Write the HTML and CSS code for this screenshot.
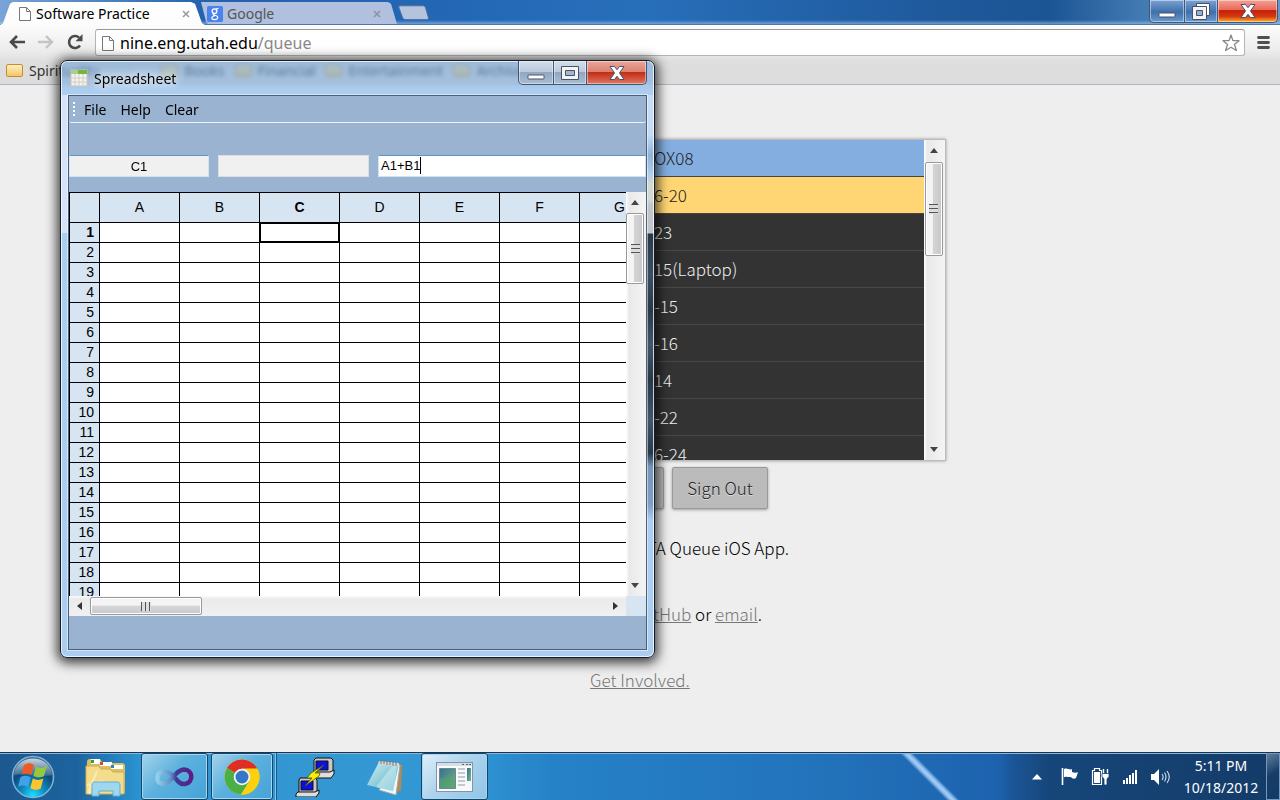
FILE: index.html
```html
<!DOCTYPE html>
<html lang="en">
<head>
<meta charset="utf-8">
<title>Software Practice</title>
<link rel="stylesheet" href="styles.css">
</head>
<body>
<header class="browser">
  <div class="tabstrip">
    <div class="tab tab-active">
      <svg class="doc" viewBox="0 0 12 14" width="12" height="14"><path d="M1 .5h6.500l4 4v9H.5V.5z M7.500.5v4h4" fill="#fff" stroke="#777"/></svg>
      <span class="tab-title">Software Practice</span>
      <button class="tab-close" aria-label="Close tab"><svg viewBox="0 0 8 8" width="8" height="8"><path d="M1 1l6 6M7 1L1 7" stroke="#999" stroke-width="1.500"/></svg></button>
    </div>
    <div class="tab tab-idle">
      <svg viewBox="0 0 16 16" width="16" height="16"><rect width="16" height="16" rx="1.500" fill="#4a82ee"/><circle cx="7.500" cy="5.200" r="2.300" fill="none" stroke="#fff" stroke-width="1.400"/><path d="M9 3l2.500-.6M7 7.500c-2 1 0 1.700 1.500 2 3.500.8 2.500 4.200-.8 4.200-3.600 0-4-3.200-.2-3.700" fill="none" stroke="#fff" stroke-width="1.200"/></svg>
      <span class="tab-title">Google</span>
      <button class="tab-close" aria-label="Close tab"><svg viewBox="0 0 8 8" width="8" height="8"><path d="M1 1l6 6M7 1L1 7" stroke="#8b93a5" stroke-width="1.500"/></svg></button>
    </div>
    <button class="newtab" aria-label="New tab"><svg viewBox="0 0 32 16" width="32" height="16"><path d="M3.500.8h22c2 0 2.600.8 3.100 2.200l2.600 9c.5 1.800 0 2.600-1.800 2.600H9c-2.200 0-3-.8-3.600-2.500L2 3C1.600 1.500 2 .8 3.500.8z" fill="#b4c4de" stroke="#54709c"/></svg></button>
    <div class="caption caption-main">
      <button class="cap cap-glass cap-first" aria-label="Minimize"><svg viewBox="0 0 18 6" width="18" height="6"><rect x="1" y="1" width="16" height="4" rx=".5" fill="#fff" stroke="#4a5268"/></svg></button>
      <button class="cap cap-glass cap-mid" aria-label="Restore"><svg viewBox="0 0 18 17" width="18" height="17"><path d="M4.500.5h13v12h-13z" fill="#fff" stroke="#4a5268"/><path d="M.5 3.500h14v13H.5z" fill="#f4f4f6" stroke="#4a5268"/><path d="M4.500 7.500h6v5h-6z" fill="#8fb0dc" stroke="#4a5268"/></svg></button>
      <button class="cap cap-hot cap-last" aria-label="Close"><svg viewBox="0 0 16 14" width="16" height="14"><path d="M1 .5h4.500L8 3.700 10.500.5H15L10.500 7l4.500 6.500h-4.500L8 10.300 5.500 13.500H1L5.500 7z" fill="#fff" stroke="#4a5268"/></svg></button>
    </div>
  </div>
  <div class="toolbar">
    <button class="tool" aria-label="Back"><svg viewBox="0 0 18 16" width="18" height="16"><path d="M17 8H4M9 2L3 8l6 6" fill="none" stroke="#4a4a4a" stroke-width="2.600"/></svg></button>
    <button class="tool" aria-label="Forward"><svg viewBox="0 0 18 16" width="18" height="16"><path d="M1 8h13M9 2l6 6-6 6" fill="none" stroke="#c4c4c4" stroke-width="2.400"/></svg></button>
    <button class="tool" aria-label="Reload"><svg viewBox="0 0 18 18" width="18" height="18"><path d="M14 12.500A6 6 0 1 1 13 4.500" fill="none" stroke="#4a4a4a" stroke-width="2.600"/><path d="M16.500 1v7.200H9.500z" fill="#4a4a4a"/></svg></button>
    <div class="omnibox">
      <svg class="doc" viewBox="0 0 12 15" width="12" height="15"><path d="M1 .5h6.500l4 4v10H.5V.5z M7.500.5v4h4" fill="#fff" stroke="#777"/></svg>
      <span class="url">nine.eng.utah.edu<span class="url-path">/queue</span></span>
      <button class="star" aria-label="Bookmark this page"><svg viewBox="0 0 18 18" width="18" height="18"><path d="M9 1l1.900 5.600 6.100.1-4.600 3.700 2 6.100L9 13.300l-5.400 3.200 2-6.100L1 6.700l6.100-.1z" fill="#fff" stroke="#888" stroke-width="1.300" stroke-linejoin="round"/></svg></button>
    </div>
    <button class="tool menu" aria-label="Menu"><svg viewBox="0 0 13 13" width="13" height="13"><path d="M1.500 1.500h10M1.500 6.500h10M1.500 11.500h10" stroke="#505050" stroke-width="2.800" stroke-linecap="round"/></svg></button>
  </div>
  <nav class="bookmarks">
    <a href="#" class="bm">Spirituality</a>
    <a href="#" class="bm bm-far">Books</a>
    <a href="#" class="bm">Financial</a>
    <a href="#" class="bm">Entertainment</a>
    <a href="#" class="bm">Archives</a>
  </nav>
</header>

<main class="page">
  <section class="queue">
    <ul class="rows">
      <li class="row row-blue">OX08</li>
      <li class="row row-gold">6-20</li>
      <li class="row">23</li>
      <li class="row">15(Laptop)</li>
      <li class="row">-15</li>
      <li class="row">-16</li>
      <li class="row">14</li>
      <li class="row">-22</li>
      <li class="row">6-24</li>
    </ul>
    <div class="vbar">
      <span class="arrow up"></span>
      <span class="thumb thumb-queue"></span>
      <span class="arrow down"></span>
    </div>
  </section>
  <div class="actions">
    <button class="btn btn-wide" aria-label="Queue action"></button>
    <button class="btn">Sign Out</button>
  </div>
  <p class="note note-app">TA Queue iOS App.</p>
  <p class="note note-links"><a href="#">GitHub</a> or <a href="#">email</a>.</p>
  <p class="note"><a href="#">Get Involved.</a></p>
</main>

<section class="window" aria-label="Spreadsheet">
  <div class="titlebar">
    <svg class="appicon" viewBox="0 0 18 18" width="18" height="18"><rect x="1" y="1" width="16" height="16" fill="#f4f2ee" stroke="#c9c5bd"/><path d="M1 1h16v4H1z" fill="#a9d08a"/><path d="M8 1h9v4H8z" fill="#72b83c"/><path d="M1 9h16M1 13h16M5 5v12M9 5v12M13 5v12" stroke="#d2cec6"/></svg>
    <h1 class="title">Spreadsheet</h1>
    <div class="caption">
      <button class="cap cap-soft cap-first" aria-label="Minimize"><svg viewBox="0 0 18 6" width="18" height="6"><rect x="1" y="1" width="16" height="4" rx=".5" fill="#fff" stroke="#4a5268"/></svg></button>
      <button class="cap cap-soft cap-mid" aria-label="Maximize"><svg viewBox="0 0 18 14" width="18" height="14"><path d="M.5.5h17v13H.5z" fill="#f4f4f6" stroke="#4a5268"/><path d="M4.500 4.500h9v5h-9z" fill="#a6b8cc" stroke="#4a5268"/></svg></button>
      <button class="cap cap-red cap-last" aria-label="Close"><svg viewBox="0 0 16 14" width="16" height="14"><path d="M1 .5h4.500L8 3.700 10.500.5H15L10.500 7l4.500 6.500h-4.500L8 10.300 5.500 13.500H1L5.500 7z" fill="#fff" stroke="#4a5268"/></svg></button>
    </div>
  </div>
  <div class="client">
    <div class="menubar">
      <span class="grip"></span>
      <button class="menuitem">File</button>
      <button class="menuitem">Help</button>
      <button class="menuitem">Clear</button>
    </div>
    <div class="fields">
      <input class="field field-name" aria-label="Cell name" value="C1" readonly>
      <input class="field field-value" aria-label="Cell value" readonly>
      <div class="field field-edit"><span class="typed" role="textbox" aria-label="Cell contents" contenteditable="true">A1+B1</span></div>
    </div>
    <div class="sheet">
      <div class="cells">
        <table class="grid">
          <thead><tr><th class="corner"></th><th>A</th><th>B</th><th class="on">C</th><th>D</th><th>E</th><th>F</th><th>G</th></tr></thead>
          <tbody id="body"></tbody>
        </table>
      </div>
      <div class="vbar vbar-sheet">
        <span class="arrow up"></span>
        <span class="thumb thumb-sheet"></span>
        <span class="arrow down"></span>
      </div>
      <div class="hbar">
        <span class="arrow left"></span>
        <span class="thumb thumb-h"></span>
        <span class="arrow right"></span>
      </div>
    </div>
  </div>
</section>

<footer class="taskbar">
  <button class="start" aria-label="Start">
    <svg viewBox="0 0 44 44" width="44" height="44"><defs><radialGradient id="orb" cx=".5" cy=".95" r=".8"><stop offset="0" stop-color="#1ce0ff"/><stop offset=".35" stop-color="#118fc4"/><stop offset=".75" stop-color="#0c4a7c"/><stop offset="1" stop-color="#38607f"/></radialGradient><linearGradient id="shine" x2="0" y2="1"><stop offset="0" stop-color="#dfe9f0" stop-opacity=".85"/><stop offset="1" stop-color="#a9c2d4" stop-opacity=".25"/></linearGradient></defs><circle cx="22" cy="22" r="20.500" fill="url(#orb)" stroke="#7db4d8" stroke-width="1.500"/><path d="M3 20C5-2 39-2 41 20 30 23 14 17 3 20z" fill="url(#shine)"/><path d="M13 10c4-2.500 7-2.300 10 0l-2.600 10c-3-2-6-2-10-.3z" fill="#ee5a24"/><path d="M25 11.500c3.500 2 7 2 11-.5l-3 10c-4 2-7 1.800-10.600 0z" fill="#94c83d"/><path d="M9.500 22c4-2 7-1.700 10.200.3L17 32c-3-2-6-2.200-10-.3z" fill="#41a2e4"/><path d="M21.800 23.500c3.500 2 7 1.800 10.600 0l-2.700 10c-4 2-7 1.500-10.400-.5z" fill="#fdc52d"/></svg>
  </button>
  <button class="task task-plain task-explorer" aria-label="Explorer">
    <svg viewBox="0 0 42 40" width="42" height="40"><path d="M3 5c0-2 1-3 3-3h10l3 4h19c2 0 3 1 3 3v27H2z" fill="#dcbf62"/><path d="M7 2h9v5H7zM16 5h12v4H16zM27 8h12v4H27z" fill="#fff"/><path d="M7 3h3v3H7z" fill="#3a9a48"/><path d="M16 5h3v3h-3z" fill="#e0442e"/><path d="M27 8h3v3h-3z" fill="#2d7fd0"/><path d="M2 9h12l3 3h9l3 3h11v22H2z" fill="#f3dd8c" stroke="#d0ae4c"/><path d="M4 36l9-22M3 28l16-4M5 37l13-12" stroke="#fff6cf" stroke-width="2" opacity=".6"/><path d="M8 39V28c0-2 1-3 3-3h22c2 0 3 1 3 3v11h-7v-5H15v5z" fill="#9ed8ee" stroke="#65acd2"/></svg>
  </button>
  <button class="task task-open" aria-label="Visual Studio">
    <svg viewBox="0 0 40 24" width="40" height="24"><defs><linearGradient id="vs" x2="1"><stop offset="0" stop-color="#8fd0ea"/><stop offset=".4" stop-color="#5f8fc4"/><stop offset=".55" stop-color="#3f3a96"/><stop offset="1" stop-color="#5a1f86"/></linearGradient></defs><path d="M20 13C15 7 11 6 7 7 1 9 1 17 7 18.500c9 2 11-13 22-14 9 0 10 13 1 14.500-5 1-7-3-10-6z" fill="none" stroke="url(#vs)" stroke-width="4.500"/></svg>
  </button>
  <button class="task task-open task-chrome" aria-label="Chrome">
    <svg viewBox="0 0 36 36" width="36" height="36"><circle cx="18" cy="18" r="17.500" fill="#fbd00f"/><path d="M18 18L3 9A17.500 17.500 0 0 1 33.200 9.500z" fill="#dd2f25"/><path d="M18 18L3 9a17.500 17.500 0 0 0 14 26.400L25.500 22z" fill="#4caf46"/><path d="M18 9.500h15.200a17.500 17.500 0 0 1-16 26L25.500 22z" fill="#fbd00f"/><circle cx="18" cy="18" r="8.300" fill="#f2f4f6"/><circle cx="18" cy="18" r="6.500" fill="#3378c6"/></svg>
  </button>
  <span class="stack"></span>
  <button class="task task-plain task-putty" aria-label="PuTTY">
    <svg viewBox="0 0 40 40" width="40" height="40"><g stroke="#111"><path d="M21 1h15l2 2v12l-2 2H19V3z" fill="#c8c8c8"/><path d="M21 4h12v9H21z" fill="#0c10dc"/><path d="M18 15h17l4-2v4l-3 4H16v-3z" fill="#dedede"/><path d="M5 21h15l2 2v12l-2 2H4V23z" fill="#c8c8c8"/><path d="M6 24h12v9H6z" fill="#0c10dc"/><path d="M3 35h17l4-2v3l-3 4H1v-3z" fill="#dedede"/></g><path d="M29 8L16 16l-4 5h5l-7 8 14-10 1-3h-5z" fill="#f8f000" stroke="#58580a" stroke-width=".8"/></svg>
  </button>
  <button class="task task-plain task-notepad" aria-label="Notepad">
    <svg viewBox="0 0 38 38" width="38" height="38"><defs><linearGradient id="np" y2="1"><stop offset="0" stop-color="#d8f0f4"/><stop offset="1" stop-color="#45acc2"/></linearGradient></defs><path d="M32 6l4 1-1 26-4 1z" fill="#b58a4a"/><path d="M31 6l3 1-4 30-17-5z" fill="#f5f8fa" stroke="#9cabb5"/><path d="M13 4l20 2-6 27L1 27z" fill="url(#np)"/><path d="M17 20l10-13 4 1-3 27-18-6z" fill="#e0f1f5" opacity=".5"/><path d="M13 3l20 2v4L12 6z" fill="#d4d6d7"/><path d="M15 2v4M18 2v4M21 2v5M24 3v4M27 3v5M30 4v4" stroke="#777"/></svg>
  </button>
  <button class="task task-current" aria-label="Spreadsheet">
    <svg viewBox="0 0 38 32" width="38" height="32"><defs><linearGradient id="pane" x2="1" y2="1"><stop offset="0" stop-color="#386c98"/><stop offset="1" stop-color="#72bd76"/></linearGradient></defs><rect x=".5" y="1.500" width="36" height="29" fill="#f7f9fa" stroke="#8295a8"/><path d="M1 2h35v3H1z" fill="#d5dde5"/><path d="M26 3.500h2M30 3.500h2M33 3.500h2" stroke="#566"/><path d="M3.500 7.500h16v20h-16z" fill="url(#pane)" stroke="#6d8799"/><path d="M4 18c5-3 10-2 15 2v7H4z" fill="#51a06b" opacity=".6"/><path d="M22 8h7M22 12h7M22 16h7M22 20h7M22 24h7" stroke="#c4c9ce" stroke-width="2"/><path d="M31 7h4v13h-4z" fill="url(#pane)"/></svg>
  </button>
  <div class="tray">
    <svg viewBox="0 0 10 6" width="10" height="6"><path d="M5 0l5 5.500H0z" fill="#fff"/></svg>
    <svg class="i-flag" viewBox="0 0 18 19" width="18" height="19"><path d="M1.500 1v17" stroke="#fff" stroke-width="1.600"/><path d="M3 2c3-1.500 5 1 8 .3V5c2 1 4 1 6 .3L15 11c-2 1.500-4 .5-5-1-3 .5-4-1-7 .3z" fill="#fff"/></svg>
    <svg class="i-batt" viewBox="0 0 19 19" width="19" height="19"><path d="M1.500 3.500h2v-2h5v2h2v14h-9z" fill="none" stroke="#fff" stroke-width="1.200"/><path d="M3 5h6v11H3z" fill="#fff"/><path d="M12.500 2v5M16.500 2v5" stroke="#fff" stroke-width="1.400"/><path d="M11 6.500h7v3l-2 2.500v6h-3v-6l-2-2.500z" fill="#fff" stroke="#143f70" stroke-width=".8"/></svg>
    <svg class="i-sig" viewBox="0 0 16 14" width="16" height="14"><path d="M1 10h2v4H1zM4 8h2v6H4zM7 5h2v9H7zM10 3h2v11h-2zM13 0h2v14h-2z" fill="#fff"/></svg>
    <svg class="i-vol" viewBox="0 0 20 18" width="20" height="18"><path d="M1 6h3l5-5v16l-5-5H1z" fill="#fff"/><path d="M12 6c1.500 2 1.500 4 0 6M14.500 4.500c2 3 2 6 0 9M17 3c3 4 3 8 0 12" fill="none" stroke="#d4e0ee" stroke-width="1.100"/></svg>
    <div class="clock"><span>5:11 PM</span><span>10/18/2012</span></div>
    <button class="peek" aria-label="Show desktop"></button>
  </div>
</footer>
<script src="sheet.js"></script>
</body>
</html>
```
FILE: sheet.js
```js
const body = document.getElementById('body');
for (let r = 1; r <= 19; r++) {
  const tr = document.createElement('tr');
  const th = document.createElement('th');
  th.textContent = r;
  if (r === 1) th.className = 'on';
  tr.appendChild(th);
  for (let c = 0; c < 7; c++) {
    const td = document.createElement('td');
    if (r === 1 && c === 2) td.className = 'selected';
    tr.appendChild(td);
  }
  body.appendChild(tr);
}
```
FILE: styles.css
```css
* { box-sizing: border-box; }
html, body { height: 100%; }
body {
  margin: 0;
  display: flex;
  flex-direction: column;
  position: relative;
  overflow: hidden;
  background: #eee;
  font-family: "Noto Sans", "Open Sans", sans-serif;
  font-size: 14px;
  color: #000;
}
button { font: inherit; color: inherit; border: 0; padding: 0; background: none; }
svg { display: block; flex: none; }

/* Browser chrome */
.browser { flex: none; background: linear-gradient(#fcfcfc 25px, #ebebeb 52px, #dedede 62px, #dcdcdc); border-bottom: 1px solid #b4b4c4; }
.tabstrip {
  display: flex;
  align-items: flex-end;
  height: 25px;
  background:
    linear-gradient(transparent 20px, rgba(160, 200, 240, .6) 24px, #5079a8 24px),
    linear-gradient(90deg, #7aa4d8, #2461ae 16%, #2367b4 34%, #286fba 50%, #1f5a9e 72%, #1c5594 82%, #4179b2 89%, #6d96c4);
}
.tab { display: flex; align-items: center; height: 23px; }
.tab-active {
  width: 205px;
  padding: 2px 15px 0 19px;
  background: linear-gradient(#fff, #fcfcfc);
  clip-path: polygon(0 100%, 3px 92%, 10px 8%, 13px 0, 191px 0, 195px 8%, 202px 92%, 205px 100%);
}
.tab-idle {
  width: 198px;
  margin-left: -6px;
  padding: 0 16px 0 8px;
  gap: 4px;
  background: #b0c0de;
  color: #555;
  clip-path: polygon(2px 0, 189px 0, 192px 8%, 198px 96%, 9px 96%, 7px 85%);
}
.tab-title { flex: 1; white-space: nowrap; }
.tab-active .tab-title { padding-left: 5px; }
.tab-active { padding-top: 0; }
.newtab { align-self: center; }
.caption { display: flex; margin-left: auto; align-self: flex-start; }
.cap {
  display: flex;
  align-items: center;
  justify-content: center;
  height: 24px;
  border: 1px solid #3d5878;
  border-top: 0;
  box-shadow: inset 0 0 0 1px rgba(255, 255, 255, .45);
}
.cap-first { width: 36px; border-radius: 0 0 0 5px; padding-top: 8px; }
.cap-mid { width: 33px; border-left: 0; }
.cap-last { width: 60px; border-left: 0; border-radius: 0 0 5px 0; }
.cap-glass { background: linear-gradient(#7ba2d0, #3d70ae 55%, #6c9ace); }
.cap-hot { background: linear-gradient(#f5a093, #e8695a 45%, #c32008 48%, #d43910 75%, #ffb02c); }
.cap-soft { background: linear-gradient(#d2deeb, #b9c9dc 48%, #91a7c2 50%, #aabdd4); }
.cap-red { background: linear-gradient(#eba698, #db8070 48%, #bd3019 50%, #d4503a 75%, #d97966); }
.caption-main .cap { height: 23px; }
.caption-main { padding-right: 2px; }

.toolbar { display: flex; align-items: center; height: 34px; padding: 0 9px 0 8px; }
.tool { width: 29px; display: flex; }
.omnibox {
  flex: 1;
  display: flex;
  align-items: center;
  height: 27px;
  padding: 2px 4px 0 6px;
  background: #fff;
  border: 1px solid #b4b4b4;
  border-top-color: #999;
  border-radius: 3px;
}
.url { flex: 1; padding-left: 6px; font-size: 16px; line-height: 24px; }
.url-path { color: #888; }
.menu { width: 26px; justify-content: flex-end; padding-right: 1px; }
.bookmarks { display: flex; align-items: center; height: 25px; padding: 0 6px 2px; gap: 10px; }
.bm { display: flex; align-items: center; gap: 6px; color: #333; text-decoration: none; line-height: 20px; }
.bm-far { margin-left: 52px; }
.bm::before {
  content: "";
  width: 15px;
  height: 11px;
  border: 1px solid #c58d33;
  border-radius: 2px;
  background: linear-gradient(#fff0bf, #f4c66a);
}

/* Queue page */
.page {
  flex: 1;
  display: flex;
  flex-direction: column;
  align-items: center;
  padding-top: 54px;
  font-family: "Noto Sans CJK SC", "Source Sans Pro", sans-serif;
  font-weight: 200;
  font-size: 17px;
  line-height: 26px;
}
.queue { display: flex; width: 612px; height: 322px; border: 1px solid #bbb; box-shadow: 0 0 3px #999; background: #333; }
.rows { flex: 1; margin: 0; padding: 0; list-style: none; overflow: hidden; }
.row { height: 37px; padding: 5px 0 5px 319px; border-bottom: 1px solid #484848; color: #eee; line-height: 26px; }
.row-blue { background: #84aee0; color: #222; border-color: #444; }
.row-gold { background: #ffd673; color: #222; border-color: #444; }
.actions { display: flex; gap: 8px; margin-top: 6px; }
.btn {
  height: 42px;
  padding: 0 14px;
  background: #bbb;
  border: 1px solid #999;
  border-radius: 2px;
  box-shadow: 0 1px 3px rgba(0, 0, 0, .35);
  color: #222;
  text-shadow: 0 1px 0 #ddd;
}
.btn-wide { width: 152px; }
.note { margin: 26px 0 14px; }
.note a { color: #777; }
.note-app { width: 298px; text-align: right; }
.note-links { width: 244px; text-align: right; }

/* Scroll bars */
.vbar { position: static; display: flex; flex-direction: column; align-items: center; width: 21px; padding: 8px 2px 8px 0; background: linear-gradient(90deg, #fff, #e9e9e9 3px, #f4f4f4); }
.arrow { width: 0; height: 0; flex: none; }
.up { border: 4px solid transparent; border-top: 0; border-bottom: 5px solid #444; }
.down { border: 4px solid transparent; border-bottom: 0; border-top: 5px solid #444; margin-top: auto; }
.left { border: 4px solid transparent; border-left: 0; border-right: 5px solid #333; }
.right { border: 4px solid transparent; border-right: 0; border-left: 5px solid #333; margin-left: auto; }
.thumb { display: flex; align-items: center; justify-content: center; border: 1px solid #999; border-radius: 2px; box-shadow: inset 0 0 0 1px #fff; background: linear-gradient(90deg, #f4f4f4 40%, #d4d4d6 45%, #c8c8cb); }
.thumb::after { content: ""; width: 9px; height: 10px; background: repeating-linear-gradient(#555 0 1px, #ddd 1px 4px); }
.thumb-queue { width: 18px; height: 94px; margin-top: 9px; }
.thumb-sheet { width: 18px; height: 71px; margin-top: 8px; }
.thumb-h { width: 112px; height: 18px; margin-left: 8px; background: linear-gradient(#f4f4f4 45%, #d6d6d8 50%, #cacacd); }
.thumb-h::after { width: 10px; height: 9px; background: repeating-linear-gradient(90deg, #555 0 1px, #ddd 1px 4px); }

/* Spreadsheet window, floating over the browser */
.window {
  position: absolute;
  left: 60px;
  top: 60px;
  width: 595px;
  height: 598px;
  display: flex;
  flex-direction: column;
  padding: 0 7px 7px;
  border: 1px solid #151d28;
  border-radius: 7px;
  background:
    linear-gradient(90deg, #d4e3f8, #d4e3f8) 0 34px / 7px 138px no-repeat,
    linear-gradient(#c8dcf5, #c4daf5 40px, #8fb1d8 60px, #b3cdea 80px, #d0d8d0 88px, #d0d8d0 105px, #c2c4ca 110px, #c2c4ca 138px, #293847 139px, #3c4e60 180px, #293847 215px, #43566a 250px, #293847 285px, #43566a 325px, #293847 358px, #7896b8 372px, #7f9fc4 410px, #abcdf0 425px, #abcdf0) 100% 34px / 7px 526px no-repeat,
    linear-gradient(rgba(116, 164, 214, .62), rgba(132, 176, 222, .62) 22px, #abcdf0 30px);
  backdrop-filter: blur(2px);
  box-shadow: inset 0 0 0 1px rgba(255, 255, 255, .75), 0 2px 12px 3px rgba(0, 0, 0, .75);
}
.titlebar { flex: none; display: flex; align-items: center; height: 34px; padding-left: 2px; }
.title { margin: 0 0 0 6px; padding-right: 6px; font-size: 14px; font-weight: 400; text-shadow: 0 0 8px #fff, 0 0 8px #fff; }
.client { flex: 1; display: flex; flex-direction: column; min-height: 0; background: #99b3d1; border: 1px solid #4a6078; box-shadow: 0 0 0 1px rgba(255, 255, 255, .5); }
.menubar { flex: none; display: flex; align-items: center; gap: 14px; height: 27px; padding-left: 4px; border-bottom: 1px solid #f0f4f8; border-radius: 3px; }
.grip { width: 2px; height: 15px; margin-right: -5px; background: repeating-linear-gradient(#fff 0 2px, #99b3d1 2px 4px); }
.fields { flex: none; display: flex; gap: 9px; margin-top: 32px; font-family: "Liberation Sans", Arial, sans-serif; }
.field { height: 22px; padding: 0 2px; border: 1px solid #cfe4f4; border-top-color: #5c97c4; background: #f0f0f0; font-family: inherit; font-size: 13px; line-height: 20px; }
.field-name { width: 140px; text-align: center; }
.field-value { width: 151px; border-color: #ddd; }
.field-edit { flex: 1; background: #fff; }
.typed { border-right: 1px solid #000; padding: 1px 0; }
.sheet { flex: none; display: grid; grid-template: 404px 20px / 1fr 20px; margin-top: 15px; background: #d7e5f2; }
.cells { overflow: hidden; background: #fff; }
.grid {
  width: 591px;
  table-layout: fixed;
  border-collapse: separate;
  border-spacing: 0;
  border: 1px solid #000;
  border-width: 1px 0 0 1px;
  font-family: "Liberation Sans", Arial, sans-serif;
  font-size: 14px;
  line-height: 19px;
}
.grid th, .grid td { padding: 0; height: 20px; border: 1px solid #000; border-width: 0 1px 1px 0; }
.grid th { background: #d7e5f2; font-weight: 400; }
.grid thead th { height: 30px; width: 80px; }
.grid thead .corner { width: 30px; }
.grid tbody th { text-align: right; padding-right: 5px; }
.grid th.on { font-weight: 700; }
.grid .selected { box-shadow: inset 1px 1px #000, inset -1px -1px #000; }
.vbar-sheet { width: 20px; }
.hbar { display: flex; align-items: center; padding: 0 8px 0 8px; background: linear-gradient(#fafafa, #ebebeb 3px, #f0f0f0); }

/* Taskbar */
.taskbar {
  flex: none;
  display: flex;
  align-items: center;
  height: 48px;
  border-top: 1px solid #1b3551;
  box-shadow: inset 0 1px #84b5dc;
  background:
    linear-gradient(45deg, transparent 44%, #8fbeef 48%, #a2cbf4 50%, #8fbeef 52%, transparent 56%) 898px 0 / 64px 48px no-repeat,
    linear-gradient(90deg, #1d588f, #1d649e 6%, #2b94d2 11%, #3497d2 25%, #3198d4 36%, #2682c7 43%, #2272ba 65%, #1d62ae 78%, #1b5699 79%, #164679 82%, #143b68);
}
.start { width: 44px; margin-left: 11px; }
.task { display: flex; align-items: center; justify-content: center; height: 47px; }
.task-explorer { width: 86px; padding-left: 14px; }
.task-open, .task-current { width: 67px; border: 1px solid #12466f; border-radius: 3px; box-shadow: inset 0 0 0 1px #a8d6ef; background: linear-gradient(135deg, #a5d3eb, #5cb1dd 45%, #45a3d8); }
.task-chrome { width: 62px; margin-left: 3px; }
.stack { width: 4px; height: 47px; border-right: 1px solid #1a5a8a; box-shadow: inset -1px 0 #84c4e8; }
.task-putty { width: 76px; }
.task-notepad { width: 64px; }
.task-current { margin-left: 4px; background: linear-gradient(135deg, #e0eff9, #aed4ed 45%, #91c4e6); }
.tray { display: flex; align-items: center; margin-left: auto; height: 47px; }
.i-flag { margin-left: 19px; }
.i-batt { margin-left: 12px; }
.i-sig { margin-left: 12px; }
.i-vol { margin-left: 12px; }
.clock { display: flex; flex-direction: column; align-items: center; width: 96px; padding-left: 6px; color: #fff; line-height: 22px; }
.peek { width: 14px; height: 47px; border: 1px solid #7498bd; background: linear-gradient(150deg, #5e7e9f, #183d66 45%, #123a68); }
```
